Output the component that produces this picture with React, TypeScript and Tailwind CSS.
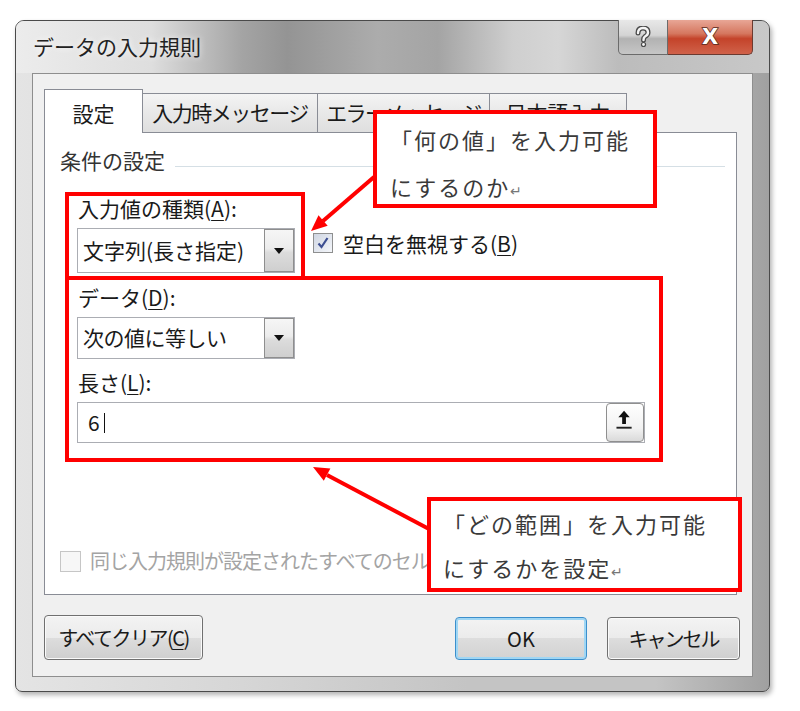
import React from 'react';

const font = "font-['Noto_Sans_CJK_JP',sans-serif]";

const ComboArrow = () => (
  <div className="w-[30px] h-full border border-[#8e8e8e] bg-[linear-gradient(#f6f6f6,#ececec_45%,#dcdcdc_55%,#cfcfcf)] flex items-center justify-center">
    <svg width="10" height="6" viewBox="0 0 10 6">
      <path d="M0 0h10L5 6z" fill="#111" />
    </svg>
  </div>
);

const Key = ({ k }: { k: string }) => <span className="underline underline-offset-[3px] decoration-1">{k}</span>;

export default function App() {
  return (
    <div className={`relative w-[800px] h-[711px] overflow-hidden bg-white pt-[20px] pl-[15px] ${font} text-[#1a1a1a]`}>
      {/* window */}
      <div className="flex flex-col w-[755px] h-[672px] rounded-t-[9px] rounded-b-[7px] border border-[#4a4a4a] bg-[linear-gradient(90deg,#e4e4e4,#d6d6d6_30%,#c4c4c4_60%,#c4c4c4_85%,#a0a0a0)] shadow-[2px_3px_5px_rgba(0,0,0,0.3)]">
        {/* title bar */}
        <div className="flex items-start h-[52px] rounded-t-[8px] bg-[linear-gradient(90deg,#ececec,#dedede_18%,#a4a4a4_30%,#949494_36%,#acacac_48%,#a4a4a4_56%,#cfcfcf_66%,#d6d6d6_72%,#bcbcbc_80%,#c8c8c8_100%)]">
          <div className="pl-[17px] pt-[12px] text-[21px] leading-[26px] text-[#222] [text-shadow:0_0_6px_#fff]">データの入力規則</div>
          <div className="ml-auto mr-[16px] -mt-px flex">
            <div className="w-[50px] h-[35px] rounded-bl-[5px] border border-t-0 border-[#6b6b6b] bg-[linear-gradient(#e8e8e8,#d4d4d4_45%,#b2b2b2_55%,#c6c6c6)] flex items-center justify-center">
              <svg width="16" height="22" viewBox="0 0 16 22">
                <path d="M3 7 Q3 2 8 2 Q13 2 13 6.5 Q13 9 10 10.5 Q8.5 11.5 8.5 14" fill="none" stroke="#4a4a4a" strokeWidth="5" strokeLinecap="round" />
                <path d="M3 7 Q3 2 8 2 Q13 2 13 6.5 Q13 9 10 10.5 Q8.5 11.5 8.5 14" fill="none" stroke="#f4f4f4" strokeWidth="2.4" strokeLinecap="round" />
                <circle cx="8.5" cy="18.5" r="2.6" fill="#4a4a4a" />
                <circle cx="8.5" cy="18.5" r="1.4" fill="#f4f4f4" />
              </svg>
            </div>
            <div className="w-[85px] h-[35px] rounded-br-[5px] border border-l-0 border-t-0 border-[#6b3a30] bg-[linear-gradient(#e8a696,#d5775f_40%,#c4432a_55%,#d0624a)] flex items-center justify-center">
              <span className="text-[21px] font-bold leading-none text-white [-webkit-text-stroke:1.5px_#5a2a20] [paint-order:stroke_fill] font-['DejaVu_Sans',sans-serif]">X</span>
            </div>
          </div>
        </div>

        {/* client area */}
        <div className="mx-[16px] h-[604px] border border-[#8e8e8e] bg-[#f0f0f0] flex flex-col pt-[15px] pl-[11px]">
          {/* tabs */}
          <div className="flex items-end text-[21px]">
            <div className="relative z-10 -mb-px h-[44px] w-[99px] border border-b-0 border-[#898c95] bg-white flex items-center justify-center pt-[4px]">設定</div>
            <div className="-ml-px h-[39px] w-[176px] border border-b-0 border-[#898c95] bg-[linear-gradient(#f4f4f4,#e8e8e8_50%,#dfdfdf)] flex items-center justify-center tracking-[-1.5px]">入力時メッセージ</div>
            <div className="-ml-px h-[39px] w-[173px] border border-b-0 border-[#898c95] bg-[linear-gradient(#f4f4f4,#e8e8e8_50%,#dfdfdf)] flex items-center justify-center tracking-[-1.5px]">エラーメッセージ</div>
            <div className="-ml-px h-[39px] w-[138px] border border-b-0 border-[#898c95] bg-[linear-gradient(#f4f4f4,#e8e8e8_50%,#dfdfdf)] flex items-center justify-center">日本語入力</div>
          </div>

          {/* tab panel */}
          <div className="w-[693px] h-[463px] border border-[#898c95] bg-white flex flex-col">
            <div className="flex items-center pt-[13px] pl-[15px] pr-[11px]">
              <span className="text-[21px] leading-[28px] text-[#333]">条件の設定</span>
              <div className="flex-1 h-px bg-[#d5dfe5] ml-[10px] mt-[12px]" />
            </div>

            <div className="flex items-end ml-[20px] mt-[18px]">
              <div className="w-[240px] border-4 border-[#ff0000] pl-[8px] pb-[3px]">
                <div className="text-[21px] leading-[24px] pl-px">入力値の種類(<Key k="A" />):</div>
                <div className="mt-[8px] flex h-[45px] w-[218px] border border-[#abadb3] bg-white">
                  <div className="flex-1 flex items-center pl-[5px] text-[21px]">文字列(長さ指定)</div>
                  <ComboArrow />
                </div>
              </div>
              <div className="ml-[8px] mb-[25px] flex items-center gap-[10px]">
                <div className="w-[20px] h-[20px] border border-[#8e8f8f] bg-[linear-gradient(135deg,#cfd6e2,#f4f6fa)] flex items-center justify-center">
                  <svg width="14" height="14" viewBox="0 0 14 14">
                    <path d="M2.5 7.5 L5.5 11 L11.5 2" fill="none" stroke="#3d4f92" strokeWidth="2.2" />
                  </svg>
                </div>
                <span className="text-[21px] leading-[24px]">空白を無視する(<Key k="B" />)</span>
              </div>
            </div>

            <div className="-mt-[4px] ml-[20px] w-[598px] border-4 border-[#ff0000] pl-[8px] pt-[5px] pb-[15px]">
              <div className="text-[21px] leading-[24px] pl-px">データ(<Key k="D" />):</div>
              <div className="mt-[8px] flex h-[42px] w-[218px] border border-[#abadb3] bg-white">
                <div className="flex-1 flex items-center pl-[5px] text-[21px] tracking-[-0.5px]">次の値に等しい</div>
                <ComboArrow />
              </div>
              <div className="mt-[11px] text-[21px] leading-[24px] pl-px">長さ(<Key k="L" />):</div>
              <div className="mt-[8px] flex items-center h-[41px] w-[568px] border border-[#abadb3] bg-white">
                <span className="pl-[10px] text-[21px] leading-none">6</span>
                <span className="ml-[4px] w-px h-[20px] bg-[#111]" />
                <div className="ml-auto w-[38px] h-[39px] rounded-[4px] border border-[#8f8f8f] bg-[linear-gradient(#ffffff,#f2f2f2_65%,#dadada)] flex items-center justify-center">
                  <svg width="38" height="39" viewBox="0 0 38 39">
                    <path d="M18 7 L24 14 L20 14 L20 21 L16 21 L16 14 L12 14 Z" fill="#111" />
                    <rect x="10" y="24" width="16" height="2" fill="#222" />
                  </svg>
                </div>
              </div>
            </div>

            <div className="mt-auto mb-[21px] ml-[15px] flex items-center gap-[9px]">
              <div className="w-[21px] h-[21px] border border-[#c6c6c6] bg-[#f7f7f7]" />
              <span className="text-[20px] leading-[24px] text-[#a4a4a4] tracking-[-1px] whitespace-nowrap">同じ入力規則が設定されたすべてのセルに変更を適用する(P)</span>
            </div>
          </div>

          {/* buttons */}
          <div className="mt-[20px] w-[696px] flex justify-between text-[20px]">
            <button className="h-[45px] w-[159px] rounded-[4px] border border-[#707070] bg-[linear-gradient(#f3f3f3,#ebebeb_50%,#dddddd_50%,#cfcfcf)] shadow-[inset_0_0_0_1px_#fafafa] tracking-[-1.5px]">すべてクリア(<Key k="C" />)</button>
            <div className="flex gap-[20px]">
              <button className="h-[43px] w-[132px] mt-[2px] rounded-[4px] border border-[#3c8fcc] bg-[linear-gradient(#f3f3f3,#ebebeb_50%,#dddddd_50%,#d2d2d2)] shadow-[inset_0_0_0_2px_#9fd6f4]">OK</button>
              <button className="h-[43px] w-[133px] mt-[2px] rounded-[4px] border border-[#707070] bg-[linear-gradient(#f3f3f3,#ebebeb_50%,#dddddd_50%,#cfcfcf)] shadow-[inset_0_0_0_1px_#fafafa] tracking-[-2px]">キャンセル</button>
            </div>
          </div>
        </div>
      </div>

      {/* annotations */}
      <div className="absolute left-[373px] top-[110px] w-[284px] h-[98px] border-4 border-[#ff0000] bg-white pl-[13px] pt-[2px] text-[22px] leading-[47px] tracking-[2px] text-[#3a3a3a]">
        <div className="whitespace-nowrap">「何の値」を入力可能</div>
        <div className="whitespace-nowrap">にするのか<span className="text-[14px] text-[#777]">↵</span></div>
      </div>
      <div className="absolute left-[427px] top-[497px] w-[315px] h-[95px] border-4 border-[#ff0000] bg-white pl-[12px] pt-[0px] text-[22px] leading-[44px] tracking-[2px] text-[#3a3a3a]">
        <div className="whitespace-nowrap">「どの範囲」を入力可能</div>
        <div className="whitespace-nowrap">にするかを設定<span className="text-[14px] text-[#777]">↵</span></div>
      </div>
      <svg className="absolute left-0 top-0 pointer-events-none" width="800" height="711" viewBox="0 0 800 711">
        <line x1="374" y1="177" x2="323" y2="221" stroke="#ff0000" strokeWidth="4" />
        <polygon points="311,231 318.5,215.2 327.7,225.8" fill="#ff0000" />
        <line x1="429" y1="529" x2="327" y2="475" stroke="#ff0000" strokeWidth="4" />
        <polygon points="313,467 330.4,468.4 323.8,480.8" fill="#ff0000" />
      </svg>
    </div>
  );
}
